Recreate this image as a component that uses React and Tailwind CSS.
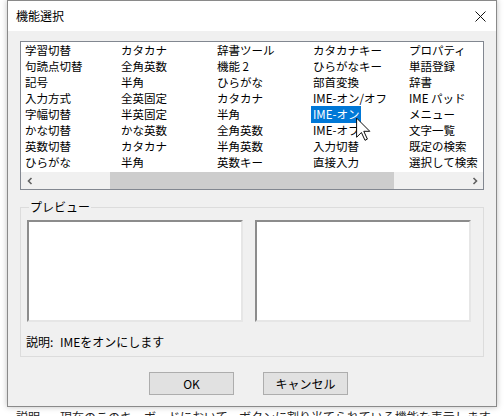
const columns = [
    ['学習切替', '句読点切替', '記号', '入力方式', '字幅切替', 'かな切替', '英数切替', 'ひらがな'],
    ['カタカナ', '全角英数', '半角', '全英固定', '半英固定', 'かな英数', 'カタカナ', '半角'],
    ['辞書ツール', '機能 2', 'ひらがな', 'カタカナ', '半角', '全角英数', '半角英数', '英数キー'],
    ['カタカナキー', 'ひらがなキー', '部首変換', 'IME-オン/オフ', 'IME-オン', 'IME-オフ', '入力切替', '直接入力'],
    ['プロパティ', '単語登録', '辞書', 'IME パッド', 'メニュー', '文字一覧', '既定の検索', '選択して検索'],
];

const font = { fontFamily: '"Noto Sans CJK JP", "Noto Sans", sans-serif' };

const Chevron = ({ dir }) => (
    <svg width="8" height="8" viewBox="0 0 8 8" fill="none" stroke="#606060" strokeWidth="1.6">
        {dir === 'left' ? <path d="M5.5 1 L2.5 4 L5.5 7" /> : <path d="M2.5 1 L5.5 4 L2.5 7" />}
    </svg>
);

const Cursor = () => (
    <svg width="15" height="25" viewBox="-0.5 -0.5 12.5 20" className="absolute left-[335px] top-[75px]">
        <path d="M0 0 L0 16 L4 12 L7 18.5 L9 17.5 L6 11 L11 11 Z" fill="white" stroke="black" strokeWidth="0.8" strokeLinejoin="miter" />
    </svg>
);

const PreviewBox = () => (
    <div className="w-[216px] h-[102px] bg-white border-2 border-t-[#8c8c8c] border-l-[#8c8c8c] border-r-[#e6e6e6] border-b-[#e6e6e6]" />
);

const App = () => {
    return (
        <div className="relative w-[504px] h-[416px] overflow-hidden bg-white text-black" style={font}>
            <div className="ml-[7px] w-[490px] h-[407px] border border-[#8a8a8a] flex flex-col shadow-[0_0_6px_rgba(0,0,0,0.25)]">
                {/* title bar */}
                <div className="h-[30px] bg-white flex items-center justify-between pl-[8px] pr-[10px]">
                    <span className="text-[12px] leading-[16px]">機能選択</span>
                    <svg width="11" height="11" viewBox="0 0 11 11" stroke="#111" strokeWidth="1">
                        <path d="M0.5 0.5 L10.5 10.5 M10.5 0.5 L0.5 10.5" />
                    </svg>
                </div>

                <div className="flex-1 bg-[#f0f0f0] pl-[12px] pt-[10px] flex flex-col">
                    {/* list */}
                    <div className="relative w-[464px] h-[149px] border border-[#828790] bg-white flex flex-col">
                        <div className="h-[130px] flex pl-[4px] overflow-hidden text-[11.5px] leading-[16px]">
                            {columns.map((col, ci) => (
                                <div key={ci} className="w-[96px] shrink-0 flex flex-col">
                                    {col.map((item, ri) => (
                                        <div key={ri} className="h-[16px] whitespace-nowrap">
                                            {ci === 3 && ri === 4 ? (
                                                <span className="bg-[#0078d7] text-white px-[2px] -ml-[2px] inline-block h-[17px]">{item}</span>
                                            ) : (
                                                item
                                            )}
                                        </div>
                                    ))}
                                </div>
                            ))}
                        </div>
                        <div className="h-[17px] flex bg-[#f0f0f0]">
                            <div className="w-[17px] flex items-center justify-center">
                                <Chevron dir="left" />
                            </div>
                            <div className="flex-1 pl-[72px]">
                                <div className="w-[284px] h-full bg-[#cdcdcd]" />
                            </div>
                            <div className="w-[17px] flex items-center justify-center">
                                <Chevron dir="right" />
                            </div>
                        </div>
                        <Cursor />
                    </div>

                    {/* preview group */}
                    <div className="relative mt-[17px] w-[464px] h-[150px] border border-[#dcdcdc] pl-[6px] pt-[12px]">
                        <span className="absolute left-[8px] -top-[9px] px-[1px] bg-[#f0f0f0] text-[12px] leading-[16px]">プレビュー</span>
                        <div className="flex gap-[12px]">
                            <PreviewBox />
                            <PreviewBox />
                        </div>
                        <div className="mt-[12px] flex text-[12px] leading-[16px] -ml-[1px]">
                            <span className="w-[34px]">説明:</span>
                            <span>IMEをオンにします</span>
                        </div>
                    </div>

                    {/* buttons */}
                    <div className="mt-[15px] flex gap-[29px] pl-[129px]">
                        <button className="w-[85px] h-[23px] bg-[#e1e1e1] border border-[#adadad] text-[12px]">OK</button>
                        <button className="w-[85px] h-[23px] bg-[#e1e1e1] border border-[#adadad] text-[12px]">キャンセル</button>
                    </div>
                </div>
            </div>
            <div className="pl-[16px] pt-[2px] flex text-[12px] leading-[16px] text-[#222]">
                <span className="w-[44px]">説明</span>
                <span>現在のこのキーボードにおいて、ボタンに割り当てられている機能を表示します</span>
            </div>
        </div>
    );
};

export default App;
